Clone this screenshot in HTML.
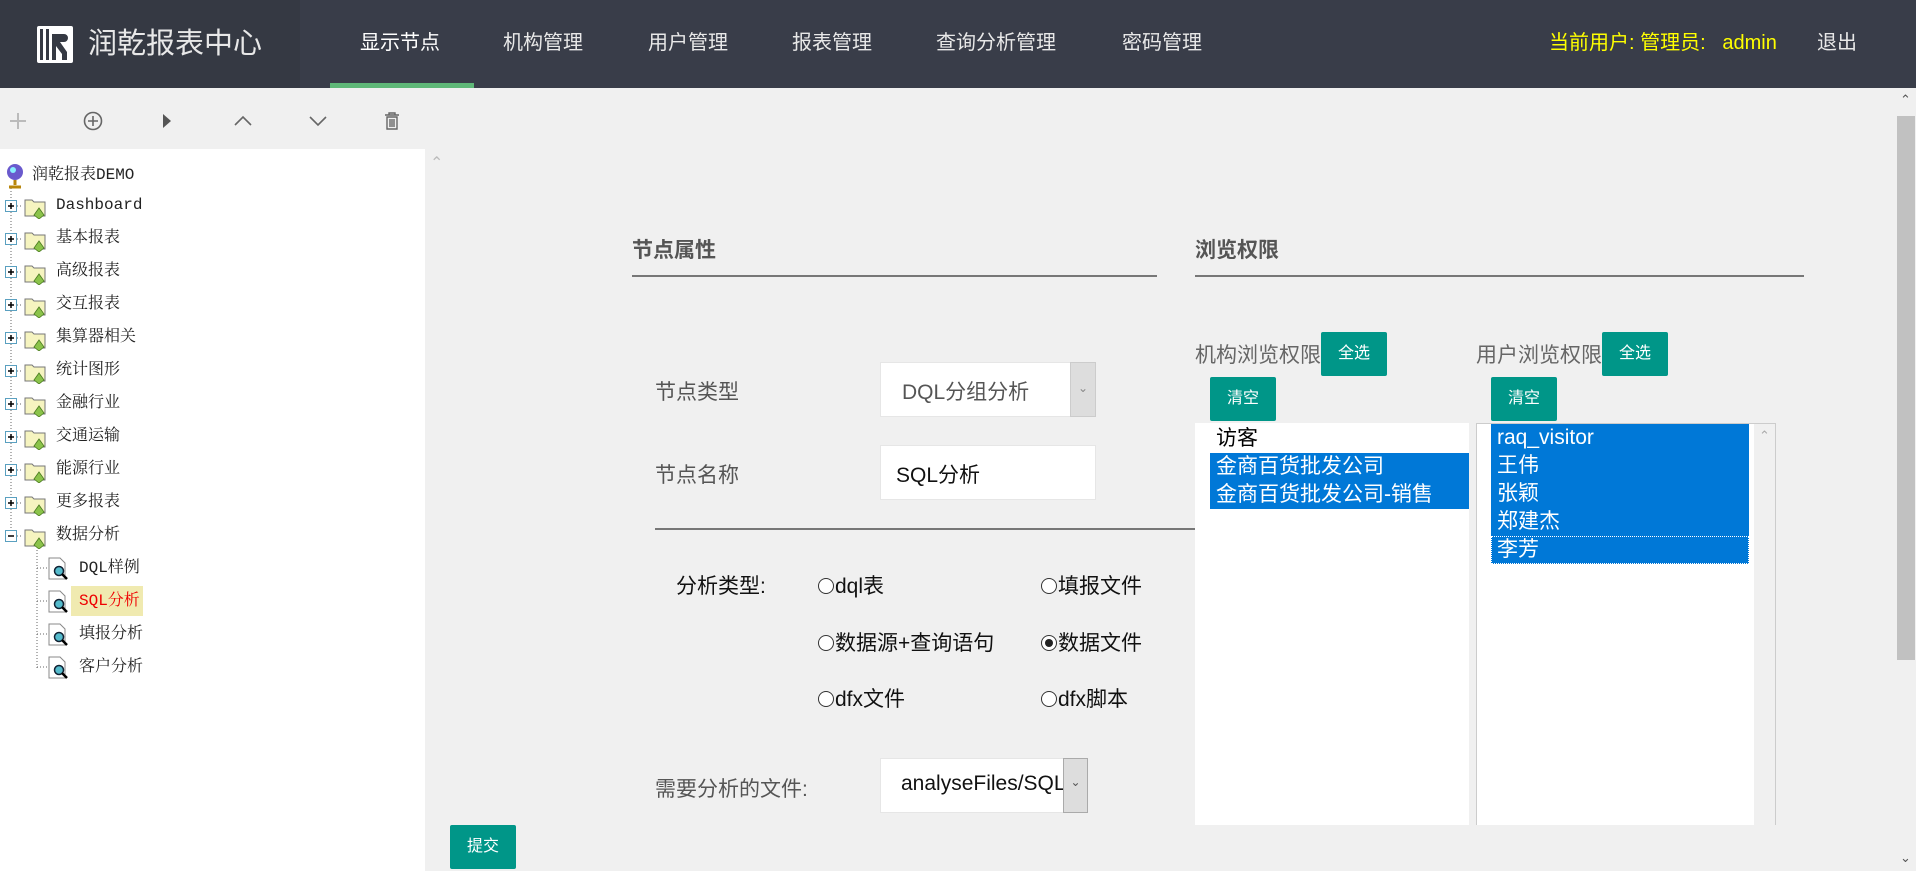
<!DOCTYPE html>
<html><head><meta charset="utf-8"><style>
*{margin:0;padding:0;box-sizing:border-box}
body{width:1916px;height:871px;overflow:hidden;background:#f0f0f0;font-family:"Liberation Sans","Noto Sans CJK SC",sans-serif;position:relative}
.a{position:absolute;white-space:nowrap}
#hdr{left:0;top:0;width:1916px;height:88px;background:#393d49}
#logo{left:0;top:0;width:300px;height:88px;background:#353943}
.nav{top:30px;font-size:20px;color:#e8e8e8;line-height:26px}
.tree{font-family:"Liberation Mono","Noto Serif CJK SC",serif;font-size:16px;color:#222;line-height:20px}
.btn{background:#009688;color:#fff;font-size:16px;text-align:center;border-radius:2px}
.lbl{font-size:21px;color:#555}
.rad{font-size:21px;color:#111;line-height:24px}
.rad i{display:inline-block;width:16px;height:16px;border:1px solid #333;border-radius:50%;vertical-align:-1px;margin-right:1px;background:#fff;position:relative}
.rad i.c:after{content:"";position:absolute;left:3px;top:3px;width:8px;height:8px;border-radius:50%;background:#222}
.li{font-size:21px;line-height:28px;padding-left:6px}
</style></head><body>
<div class="a" id="hdr"></div>
<div class="a" id="logo"></div>
<svg class="a" style="left:37px;top:26px" width="36" height="37" viewBox="0 0 36 37"><rect x="0" y="0" width="36" height="37" rx="2" fill="#fff"/><rect x="3" y="3" width="3" height="31" fill="#353943"/><rect x="9" y="3" width="3" height="31" fill="#353943"/><path d="M15 8h12a4 4 0 0 1 0 8h-4l7 10v8h-5v-6l-6-8h-4z" fill="#353943"/><rect x="15" y="16" width="4" height="18" fill="#353943"/></svg>
<div class="a" style="left:88px;top:25px;font-size:29px;color:#e8e8e8;line-height:38px">润乾报表中心</div>
<div class="a nav" style="left:360px;color:#fff">显示节点</div>
<div class="a" style="left:330px;top:83px;width:144px;height:5px;background:#5fb878"></div>
<div class="a nav" style="left:503px">机构管理</div>
<div class="a nav" style="left:648px">用户管理</div>
<div class="a nav" style="left:792px">报表管理</div>
<div class="a nav" style="left:936px">查询分析管理</div>
<div class="a nav" style="left:1122px">密码管理</div>
<div class="a nav" style="left:1549px;color:#ffff00;font-size:20px">当前用户: 管理员:&nbsp;&nbsp;&nbsp;admin</div>
<div class="a nav" style="left:1817px">退出</div>

<svg class="a" style="left:0;top:105px" width="420" height="32" viewBox="0 0 420 32" fill="none" stroke="#666" stroke-width="1.6">
<path d="M18 8v16M10 16h16" stroke="#bbb" stroke-width="2"/>
<circle cx="93" cy="16" r="8.5"/><path d="M93 11v10M88 16h10"/>
<path d="M163 9l8 7-8 7z" fill="#555" stroke="none"/>
<path d="M235 20l8-8 8 8"/>
<path d="M310 12l8 8 8-8"/>
<path d="M385 10h14M389 10v-2h6v2M387 12h10v12h-10zM390 14v8M392 14v8M394 14v8" stroke-width="1.4"/>
</svg>

<div class="a" style="left:0;top:149px;width:425px;height:722px;background:#fff"></div>
<div class="a" style="left:71px;top:586px;width:72px;height:30px;background:#f0eab0"></div>
<div class="a" style="left:430px;top:153px;color:#bbb;font-size:16px">&#8963;</div>
<svg class="a" style="left:0;top:160px" width="120" height="520">
<g stroke="#666" stroke-dasharray="1,2" fill="none">
<path d="M11 28V376"/>
<path d="M37 390V508"/>
<path d="M37 408h12M37 441h12M37 474h12M37 507h12"/>
</g>
</svg>
<svg class="a" style="left:4px;top:162px" width="22" height="28" viewBox="0 0 22 28"><circle cx="11" cy="10" r="8" fill="#6a5acd"/><circle cx="9" cy="8" r="3" fill="#8ef"/><path d="M11 18v5M5 25h12" stroke="#b8860b" stroke-width="3"/></svg>
<div class="a tree" style="left:32px;top:165px">润乾报表DEMO</div>
<div id="tr"></div>
<script>
var n=["Dashboard","基本报表","高级报表","交互报表","集算器相关","统计图形","金融行业","交通运输","能源行业","更多报表","数据分析"],h="";
n.forEach(function(t,i){var y=205+33*i;
h+='<svg class="a" style="left:4px;top:'+(y-10)+'px" width="52" height="24" viewBox="0 0 52 24"><rect x="1.5" y="5.5" width="11" height="11" fill="#fff" stroke="#5aa0c0"/><path d="M4 11h6'+(i<10?'M7 8v6':'')+'" stroke="#000" stroke-width="1.5"/><path d="M13 11h6" stroke="#666" stroke-dasharray="1,2"/><path d="M21 5h7l2 2h11v14H21z" fill="#f6f4c0" stroke="#777"/><path d="M30 20l5-7 5 7-5 4z" fill="#8bc34a" stroke="#4a7a20" stroke-width=".8"/></svg>';
h+='<div class="a tree" style="left:56px;top:'+(y-10)+'px">'+t+'</div>';});
var c=["DQL样例","SQL分析","填报分析","客户分析"];
c.forEach(function(t,i){var y=568+33*i;
h+='<svg class="a" style="left:47px;top:'+(y-12)+'px" width="26" height="26" viewBox="0 0 26 26"><path d="M2 2h11l5 5v16H2z" fill="#fff" stroke="#888"/><circle cx="12" cy="15" r="4.5" fill="#5bc" stroke="#123" stroke-width="1.5"/><path d="M15 18l5 5" stroke="#000" stroke-width="2.5"/></svg>';
h+='<div class="a tree" style="left:79px;top:'+(y-10)+'px;'+(i==1?'color:#e00':'')+'">'+t+'</div>';});
document.getElementById("tr").innerHTML=h;
</script>

<div class="a" style="left:1896px;top:88px;width:20px;height:783px;background:#f0f0f0"></div>
<div class="a" style="left:1897px;top:116px;width:18px;height:544px;background:#c1c1c1"></div>
<div class="a" style="left:1900px;top:92px;font-size:13px;color:#555">&#8963;</div>
<div class="a" style="left:1900px;top:850px;font-size:13px;color:#555">&#8964;</div>

<div class="a" style="left:632px;top:234px;font-size:21px;font-weight:bold;color:#555">节点属性</div>
<div class="a" style="left:632px;top:275px;width:525px;height:2px;background:#777"></div>
<div class="a" style="left:1195px;top:234px;font-size:21px;font-weight:bold;color:#555">浏览权限</div>
<div class="a" style="left:1195px;top:275px;width:609px;height:2px;background:#777"></div>

<div class="a lbl" style="left:655px;top:376px">节点类型</div>
<div class="a" style="left:880px;top:362px;width:216px;height:55px;background:#fff;border:1px solid #e6e6e6"></div>
<div class="a" style="left:902px;top:376px;font-size:21px;color:#555">DQL分组分析</div>
<div class="a" style="left:1070px;top:362px;width:26px;height:55px;background:#ddd;border:1px solid #ccc;color:#888;font-size:12px;text-align:center;line-height:50px">&#8964;</div>

<div class="a lbl" style="left:655px;top:459px">节点名称</div>
<div class="a" style="left:880px;top:445px;width:216px;height:55px;background:#fff;border:1px solid #e6e6e6"></div>
<div class="a" style="left:896px;top:459px;font-size:21px;color:#111">SQL分析</div>
<div class="a" style="left:655px;top:528px;width:540px;height:2px;background:#777"></div>

<div class="a rad" style="left:676px;top:575px">分析类型:</div>
<div class="a rad" style="left:818px;top:575px"><i></i>dql表</div>
<div class="a rad" style="left:1041px;top:575px"><i></i>填报文件</div>
<div class="a rad" style="left:818px;top:632px"><i></i>数据源+查询语句</div>
<div class="a rad" style="left:1041px;top:632px"><i class="c"></i>数据文件</div>
<div class="a rad" style="left:818px;top:688px"><i></i>dfx文件</div>
<div class="a rad" style="left:1041px;top:688px"><i></i>dfx脚本</div>

<div class="a lbl" style="left:655px;top:773px">需要分析的文件:</div>
<div class="a" style="left:880px;top:758px;width:208px;height:55px;background:#fff;border:1px solid #e6e6e6;overflow:hidden"><div style="position:absolute;left:20px;top:13px;font-size:21px;color:#111;white-space:nowrap">analyseFiles/SQL</div></div>
<div class="a" style="left:1063px;top:758px;width:25px;height:55px;background:#ddd;border:1px solid #aaa;color:#555;font-size:12px;text-align:center;line-height:46px">&#8964;</div>

<div class="a btn" style="left:450px;top:825px;width:66px;height:44px;line-height:44px">提交</div>

<div class="a lbl" style="left:1195px;top:339px;color:#666">机构浏览权限</div>
<div class="a btn" style="left:1321px;top:332px;width:66px;height:44px;line-height:44px">全选</div>
<div class="a btn" style="left:1210px;top:377px;width:66px;height:44px;line-height:44px">清空</div>
<div class="a lbl" style="left:1476px;top:339px;color:#666">用户浏览权限</div>
<div class="a btn" style="left:1602px;top:332px;width:66px;height:44px;line-height:44px">全选</div>
<div class="a btn" style="left:1491px;top:377px;width:66px;height:44px;line-height:44px">清空</div>

<div class="a" style="left:1195px;top:423px;width:274px;height:402px;background:#fff"></div>
<div class="a" style="left:1210px;top:425px;width:259px">
<div class="li" style="color:#000">访客</div>
<div class="li" style="background:#0078d7;color:#fff">金商百货批发公司</div>
<div class="li" style="background:#0078d7;color:#fff">金商百货批发公司-销售</div>
</div>
<div class="a" style="left:1476px;top:423px;width:300px;height:402px;background:#fff;border:1px solid #ccc;border-bottom:none"></div>
<div class="a" style="left:1754px;top:424px;width:21px;height:401px;background:#f0f0f0"></div>
<div class="a" style="left:1759px;top:428px;font-size:13px;color:#aaa">&#8963;</div>
<div class="a" style="left:1491px;top:424px;width:258px;color:#fff">
<div class="li" style="background:#0078d7">raq_visitor</div>
<div class="li" style="background:#0078d7">王伟</div>
<div class="li" style="background:#0078d7">张颖</div>
<div class="li" style="background:#0078d7">郑建杰</div>
<div class="li" style="background:#0078d7;outline:1px dotted #fff;outline-offset:-1px">李芳</div>
</div>
</body></html>
